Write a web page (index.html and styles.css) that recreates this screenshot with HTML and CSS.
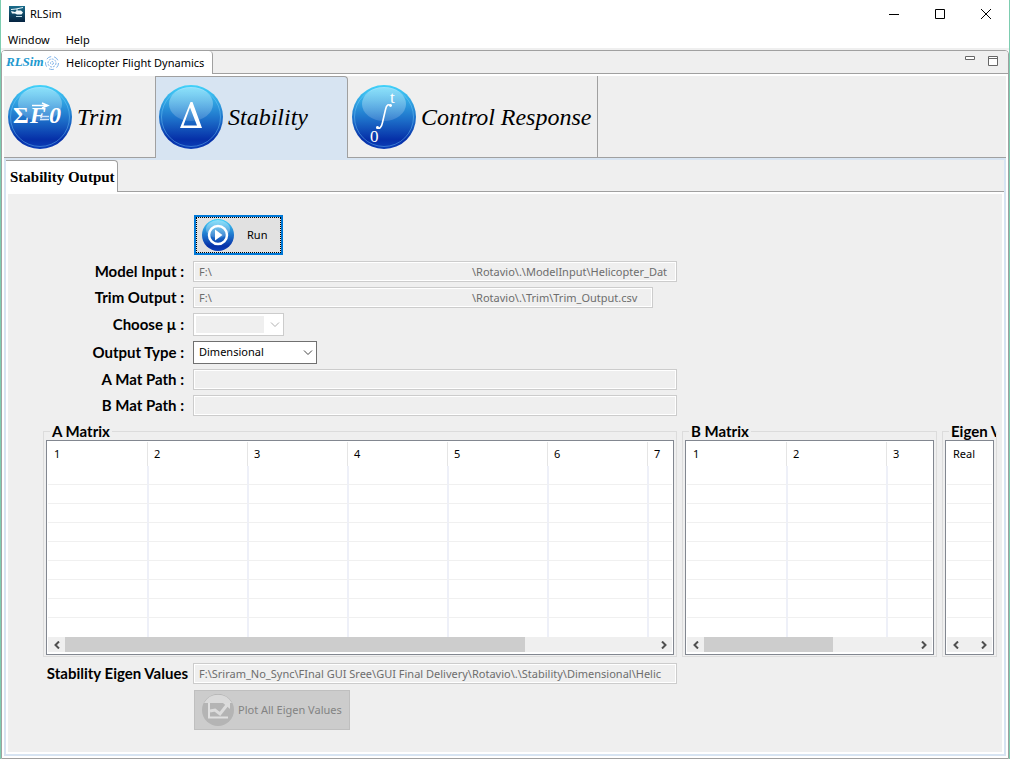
FILE: index.html
```html
<!DOCTYPE html>
<html lang="en">
<head>
<meta charset="utf-8">
<title>RLSim</title>
<link rel="stylesheet" href="styles.css">
</head>
<body>
<svg class="defs" width="0" height="0" aria-hidden="true">
  <defs>
    <linearGradient id="ball" x1="0" y1="0" x2="0" y2="1">
      <stop offset="0" stop-color="#42d3fa"/>
      <stop offset=".25" stop-color="#32a6e3"/>
      <stop offset=".55" stop-color="#1c6dc8"/>
      <stop offset=".85" stop-color="#0630a8"/>
      <stop offset="1" stop-color="#0c3fb8"/>
    </linearGradient>
    <linearGradient id="gloss" x1="0" y1="0" x2="0" y2="1">
      <stop offset="0" stop-color="#fff" stop-opacity=".4"/>
      <stop offset="1" stop-color="#fff" stop-opacity=".14"/>
    </linearGradient>
    <linearGradient id="app" x1="0" y1="0" x2="0" y2="1">
      <stop offset="0" stop-color="#1b6d8c"/>
      <stop offset="1" stop-color="#052340"/>
    </linearGradient>
    <symbol id="orb" viewBox="0 0 64 64">
      <circle cx="32" cy="32" r="32" fill="url(#ball)"/>
      <circle cx="32" cy="32" r="29.500" fill="none" stroke="#7fd4ff" stroke-opacity=".4"/>
      <ellipse cx="32" cy="19" rx="22" ry="17" fill="url(#gloss)"/>
    </symbol>
  </defs>
</svg>
<div class="window">
  <header class="titlebar">
    <svg class="app-icon" viewBox="0 0 16 16" aria-hidden="true">
      <rect width="16" height="16" fill="url(#app)"/>
      <path d="M2 3.500l5-.5 7-1.500M8 3v2" fill="none" stroke="#e8f6fb"/>
      <path d="M2 5l4 1 2-1.500h4l2 2-1.500 2H8L6 7.500H3z" fill="#f4fbfd"/>
      <path d="M7 10.500h6" fill="none" stroke="#bcd9e4"/>
    </svg>
    <h1 class="title">RLSim</h1>
    <div class="window-buttons">
      <button type="button" aria-label="Minimize"><svg viewBox="0 0 10 10"><path d="M0 5.500h10"/></svg></button>
      <button type="button" aria-label="Maximize"><svg viewBox="0 0 10 10"><path d="M.5.5h9v9h-9z"/></svg></button>
      <button type="button" aria-label="Close"><svg viewBox="0 0 10 10"><path d="M0 0l10 10M10 0L0 10"/></svg></button>
    </div>
  </header>
  <nav class="menubar">
    <button type="button">Window</button>
    <button type="button">Help</button>
  </nav>
  <main class="view">
    <div class="view-tabs">
      <button type="button" class="view-tab">
        <svg class="brand" viewBox="0 0 54 16" aria-hidden="true">
          <text x="0" y="11" class="brand-text">RLSim</text>
          <g fill="none" stroke="#7fb2e8" stroke-width="1" stroke-dasharray="2 1">
            <circle cx="46" cy="8" r="1.500"/><circle cx="46" cy="8" r="4"/><circle cx="46" cy="8" r="6.500" stroke-dasharray="5 3"/>
          </g>
        </svg>
        <span>Helicopter Flight Dynamics</span>
      </button>
      <div class="view-tools">
        <button type="button" aria-label="Minimize view"><svg viewBox="0 0 10 10"><path d="M.5.500h9v3h-9z"/></svg></button>
        <button type="button" aria-label="Maximize view"><svg viewBox="0 0 10 10"><path d="M.5.500h9v9h-9zM.5 2.500h9"/></svg></button>
      </div>
    </div>
    <div class="mode-tabs">
      <button type="button" class="mode trim">
        <svg class="orb" viewBox="0 0 64 64" aria-hidden="true">
          <use href="#orb"/>
          <text x="5" y="38" class="math bold">Σ<tspan class="slant" dx="1">F</tspan></text>
          <path d="M32 31.500h9M32 34.500h9" stroke="#d4e6fa" stroke-width="1.400"/>
          <text x="41" y="38" class="math bold slant">0</text>
          <path d="M24 20.500h15M34 18l6 2.500-6 2.500" fill="none" stroke="#fff" stroke-width="1.400"/>
        </svg>
        <span>Trim</span>
      </button>
      <button type="button" class="mode stability selected">
        <svg class="orb" viewBox="0 0 64 64" aria-hidden="true">
          <use href="#orb"/>
          <path fill-rule="evenodd" d="M21 43L31.500 17h2L43 43zM24.500 40.500H38L31 22.500z" fill="#fff"/>
        </svg>
        <span>Stability</span>
      </button>
      <button type="button" class="mode control">
        <svg class="orb" viewBox="0 0 64 64" aria-hidden="true">
          <use href="#orb"/>
          <path d="M24.500 42.500c3 2 5 0 6-5l3-13c1-5 3-6 6-3.500" fill="none" stroke="#fff" stroke-width="1.600"/>
          <circle cx="25.500" cy="42.500" r="1.400" fill="#fff"/><circle cx="38.500" cy="20.500" r="1.400" fill="#fff"/>
          <text x="38" y="18" class="math limit">t</text>
          <text x="18" y="57" class="math limit">0</text>
        </svg>
        <span>Control Response</span>
      </button>
    </div>
    <section class="panel">
      <div class="output-tabs">
        <button type="button" class="output-tab">Stability Output</button>
      </div>
      <form class="content">
        <div class="fields">
          <button type="button" class="action run">
            <svg viewBox="0 0 32 32" aria-hidden="true">
              <circle cx="16" cy="16" r="16" fill="url(#ball)"/>
              <ellipse cx="16" cy="10" rx="12" ry="9" fill="url(#gloss)"/>
              <circle cx="16" cy="16" r="9" fill="none" stroke="#fff" stroke-width="2.500"/>
              <path d="M13 10.500v11l7.500-5.500z" fill="#fff"/>
            </svg>
            <span>Run</span>
          </button>
          <label for="model">Model Input :</label>
          <input id="model" type="text" disabled value="F:\                                                                                           \Rotavio\.\ModelInput\Helicopter_Dat">
          <label for="trim">Trim Output :</label>
          <input id="trim" class="narrow" type="text" disabled value="F:\                                                                                           \Rotavio\.\Trim\Trim_Output.csv">
          <label for="mu">Choose µ :</label>
          <div class="combo small">
            <select id="mu" disabled><option></option></select>
            <svg viewBox="0 0 10 6" aria-hidden="true"><path d="M1 .5l4 4 4-4"/></svg>
          </div>
          <label for="type">Output Type :</label>
          <div class="combo">
            <select id="type"><option>Dimensional</option></select>
            <svg viewBox="0 0 10 6" aria-hidden="true"><path d="M1 .5l4 4 4-4"/></svg>
          </div>
          <label for="amat">A Mat Path :</label>
          <input id="amat" type="text" disabled>
          <label for="bmat">B Mat Path :</label>
          <input id="bmat" type="text" disabled>
        </div>
        <div class="matrices">
          <fieldset>
            <legend>A Matrix</legend>
            <div class="grid-box">
              <div class="grid-view">
                <table class="seven">
                  <thead><tr><th>1</th><th>2</th><th>3</th><th>4</th><th>5</th><th>6</th><th>7</th></tr></thead>
                  <tbody>
                    <tr><td></td><td></td><td></td><td></td><td></td><td></td><td></td></tr>
                    <tr><td></td><td></td><td></td><td></td><td></td><td></td><td></td></tr>
                    <tr><td></td><td></td><td></td><td></td><td></td><td></td><td></td></tr>
                    <tr><td></td><td></td><td></td><td></td><td></td><td></td><td></td></tr>
                    <tr><td></td><td></td><td></td><td></td><td></td><td></td><td></td></tr>
                    <tr><td></td><td></td><td></td><td></td><td></td><td></td><td></td></tr>
                    <tr><td></td><td></td><td></td><td></td><td></td><td></td><td></td></tr>
                    <tr><td></td><td></td><td></td><td></td><td></td><td></td><td></td></tr>
                    <tr><td></td><td></td><td></td><td></td><td></td><td></td><td></td></tr>
                  </tbody>
                </table>
              </div>
              <div class="scrollbar">
                <button type="button" aria-label="Scroll left"><svg viewBox="0 0 6 8"><path d="M5 .5L1.500 4 5 7.500"/></svg></button>
                <div class="track"><div class="thumb" style="width:78%"></div></div>
                <button type="button" aria-label="Scroll right"><svg viewBox="0 0 6 8"><path d="M1 .5L4.500 4 1 7.500"/></svg></button>
              </div>
            </div>
          </fieldset>
          <fieldset>
            <legend>B Matrix</legend>
            <div class="grid-box">
              <div class="grid-view">
                <table class="three">
                  <thead><tr><th>1</th><th>2</th><th>3</th></tr></thead>
                  <tbody>
                    <tr><td></td><td></td><td></td></tr>
                    <tr><td></td><td></td><td></td></tr>
                    <tr><td></td><td></td><td></td></tr>
                    <tr><td></td><td></td><td></td></tr>
                    <tr><td></td><td></td><td></td></tr>
                    <tr><td></td><td></td><td></td></tr>
                    <tr><td></td><td></td><td></td></tr>
                    <tr><td></td><td></td><td></td></tr>
                    <tr><td></td><td></td><td></td></tr>
                  </tbody>
                </table>
              </div>
              <div class="scrollbar">
                <button type="button" aria-label="Scroll left"><svg viewBox="0 0 6 8"><path d="M5 .5L1.500 4 5 7.500"/></svg></button>
                <div class="track"><div class="thumb" style="width:61%"></div></div>
                <button type="button" aria-label="Scroll right"><svg viewBox="0 0 6 8"><path d="M1 .5L4.500 4 1 7.500"/></svg></button>
              </div>
            </div>
          </fieldset>
          <fieldset>
            <legend class="clipped">Eigen Values</legend>
            <div class="grid-box">
              <div class="grid-view">
                <table class="one">
                  <thead><tr><th>Real</th></tr></thead>
                  <tbody>
                    <tr><td></td></tr><tr><td></td></tr><tr><td></td></tr>
                    <tr><td></td></tr><tr><td></td></tr><tr><td></td></tr>
                    <tr><td></td></tr><tr><td></td></tr><tr><td></td></tr>
                  </tbody>
                </table>
              </div>
              <div class="scrollbar">
                <button type="button" aria-label="Scroll left"><svg viewBox="0 0 6 8"><path d="M5 .5L1.500 4 5 7.500"/></svg></button>
                <div class="track"></div>
                <button type="button" aria-label="Scroll right"><svg viewBox="0 0 6 8"><path d="M1 .5L4.500 4 1 7.500"/></svg></button>
              </div>
            </div>
          </fieldset>
        </div>
        <div class="fields">
          <label for="eigen" class="wide">Stability Eigen Values</label>
          <input id="eigen" type="text" disabled value="F:\Sriram_No_Sync\FInal GUI Sree\GUI Final Delivery\Rotavio\.\Stability\Dimensional\Helic">
          <button type="button" class="action plot" disabled>
            <svg viewBox="0 0 32 32" aria-hidden="true">
              <circle cx="16" cy="16" r="16" fill="#b4b4b4"/>
              <path d="M2 9a16 16 0 0 1 28 0z" fill="#dadada"/>
              <path d="M7 9v14.500h19" fill="none" stroke="#e0e0e0" stroke-width="2"/>
              <path d="M8 17l5-1 5 4 7-9" fill="none" stroke="#dcdcdc" stroke-width="3"/>
              <path d="M21 9h7v6z" fill="#dcdcdc"/>
            </svg>
            <span>Plot All Eigen Values</span>
          </button>
        </div>
      </form>
    </section>
  </main>
</div>
</body>
</html>
```
FILE: styles.css
```css
* {
  box-sizing: border-box;
}

body {
  margin: 0;
  background: #fff;
  color: #000;
  font: 11px/16px "Noto Sans", "Open Sans", sans-serif;
}

button,
input,
select {
  margin: 0;
  padding: 0;
  border: 0;
  border-radius: 0;
  background: none;
  color: inherit;
  font: inherit;
}

svg {
  display: block;
  flex: none;
}

.defs {
  position: absolute;
}

.window {
  display: flex;
  flex-direction: column;
  min-height: 100vh;
  border: solid #7dcdb0;
  border-width: 0 1px;
}

/* Title and menu */

.titlebar {
  display: flex;
  align-items: center;
  height: 28px;
  padding-left: 8px;
}

.app-icon {
  width: 16px;
  height: 16px;
}

.title {
  flex: 1;
  margin: 0;
  padding-left: 5px;
  font-size: 11px;
  font-weight: 400;
}

.window-buttons {
  display: flex;
}

.window-buttons button {
  display: grid;
  place-items: center;
  width: 46px;
  height: 28px;
}

.window-buttons svg,
.view-tools svg {
  width: 10px;
  height: 10px;
  fill: none;
  stroke: #000;
}

.menubar {
  display: flex;
  gap: 16px;
  height: 22px;
  padding: 4px 7px 2px;
  border-bottom: 2px solid #efefef;
}

/* Outer view */

.view {
  display: flex;
  flex: 1;
  flex-direction: column;
  border: 1px solid #a0a0a0;
  border-radius: 4px 4px 0 0;
  overflow: hidden;
}

.view-tabs {
  display: flex;
  justify-content: space-between;
  height: 23px;
  background: linear-gradient(#a0a0a0, #a0a0a0) bottom / 100% 1px no-repeat #efefef;
}

.view-tab {
  display: flex;
  align-items: center;
  gap: 6px;
  padding: 0 8px 0 4px;
  border-right: 1px solid #a0a0a0;
  border-radius: 0 4px 0 0;
  background: #fff;
}

.brand {
  width: 54px;
  height: 16px;
}

.brand-text {
  fill: #2199cf;
  font: italic bold 13px "Liberation Serif", serif;
}

.view-tools {
  display: flex;
  align-items: flex-start;
  gap: 13px;
  padding: 5px 10px;
}

.view-tools svg {
  fill: #fff;
  stroke: #666;
}

.mode-tabs {
  display: flex;
  height: 84px;
  margin: 2px 2px 0;
  border-bottom: 2px solid #d7e4f2;
  background: linear-gradient(#a0a0a0, #a0a0a0) bottom / 100% 1px no-repeat #efefef;
}

.mode {
  display: flex;
  align-items: center;
  gap: 5px;
  padding: 0 2px 1px 4px;
  border-right: 1px solid #a0a0a0;
  font: italic 24px/32px "Liberation Serif", serif;
  white-space: nowrap;
}

.trim {
  min-width: 152px;
}

.stability {
  min-width: 192px;
}

.control {
  min-width: 250px;
}

.selected {
  padding: 0 2px 2px 3px;
  border-top: 1px solid #a0a0a0;
  border-radius: 0 4px 0 0;
  background: #d7e4f2;
}

.orb {
  width: 64px;
  height: 64px;
}

.math {
  fill: #fff;
  font: 24px "Liberation Serif", serif;
}

.limit {
  font-size: 17px;
}

.bold {
  font-weight: 700;
}

.slant {
  font-style: italic;
}

/* Output panel */

.panel {
  display: flex;
  flex: 1;
  flex-direction: column;
  margin: 0 2px 2px;
  border: 2px solid #d7e4f2;
  border-top: 0;
  background: #fff;
}

.output-tabs {
  display: flex;
  height: 32px;
  background: linear-gradient(#a0a0a0, #a0a0a0) bottom / 100% 1px no-repeat #efefef;
}

.output-tab {
  padding: 0 2px 0 4px;
  border: solid #a0a0a0;
  border-width: 1px 1px 0 0;
  border-radius: 0 4px 0 0;
  background: #fff;
  font: bold 15px/20px "Liberation Serif", serif;
}

.content {
  display: flex;
  flex: 1;
  flex-direction: column;
  margin: 2px;
  padding: 21px 5px 21px 35px;
  background: #efefef;
}

.fields {
  display: grid;
  grid-template-columns: 145px minmax(0, 484px);
  gap: 5px;
  align-items: center;
}

.fields label,
legend {
  font-family: Lato, "Noto Sans", sans-serif;
  font-size: 15px;
  font-weight: 700;
  white-space: nowrap;
}

.fields label {
  padding: 0 4px 2px 0;
  line-height: 18px;
  text-align: right;
}

.fields .wide {
  padding-right: 0;
}

.fields input {
  width: 100%;
  height: 21px;
  padding: 0 2px 0 5px;
  border: 1px solid #ccc;
  background: #efefef;
  box-shadow: inset 0 0 0 1px #fff;
  color: #6d6d6d;
}

.fields .narrow {
  width: 95%;
}

.action {
  display: flex;
  grid-column: 2;
  justify-self: start;
  align-items: center;
  height: 40px;
  margin-left: 1px;
}

.action svg {
  width: 32px;
  height: 32px;
}

.run {
  gap: 13px;
  margin-bottom: 1px;
  padding: 0 14px 0 6px;
  border: 2px solid #0078d7;
  outline: 1px dotted #000;
  outline-offset: -3px;
  background: #e1e1e1;
}

.plot {
  gap: 4px;
  margin-top: 1px;
  padding: 0 7px;
  border: 1px solid #bfbfbf;
  background: #ccc;
  color: #838383;
}

.combo {
  position: relative;
  width: 124px;
}

.small {
  width: 91px;
}

.combo select {
  display: block;
  width: 100%;
  height: 23px;
  padding: 0 20px 2px 5px;
  border: 1px solid #707070;
  background: #fff;
  appearance: none;
}

.combo select:disabled {
  border-color: #ccc;
  background: linear-gradient(#efefef, #efefef) 2px 2px / calc(100% - 21px) calc(100% - 4px) no-repeat #fff;
  opacity: 1;
}

.combo svg {
  position: absolute;
  top: 9px;
  right: 4px;
  width: 10px;
  height: 6px;
  fill: none;
  stroke: #444;
  pointer-events: none;
}

.small svg {
  stroke: #b0b0b0;
}

/* Matrices */

.matrices {
  display: grid;
  grid-template-columns: minmax(0, 634fr) minmax(0, 255fr) minmax(0, 55fr);
  gap: 5px;
  margin: 8px 0 6px;
}

fieldset {
  min-width: 0;
  margin: 0;
  padding: 2px 2px 1px;
  border: 1px solid #dcdcdc;
}

legend {
  margin-left: 4px;
  padding: 0 2px;
  line-height: 14px;
}

.clipped {
  max-width: calc(100% - 2px);
  overflow-x: clip;
}

.grid-box {
  padding: 1px 1px 2px;
  border: 1px solid #828790;
  background: #fff;
}

.grid-view {
  overflow: hidden;
}

table {
  border-spacing: 0;
  table-layout: fixed;
}

.seven {
  width: 700px;
}

.three {
  width: 300px;
}

.one {
  width: 100px;
}

th,
td {
  padding: 0;
  border-right: 1px solid #e5e5e5;
}

th {
  height: 24px;
  padding-left: 6px;
  font-weight: 400;
  text-align: left;
}

td {
  height: 19px;
  border-right-color: #eef0f8;
  border-bottom: 1px solid #f0f0f0;
}

td + td {
  border-left: 1px solid #eef0f8;
}

tr:last-child td {
  border-bottom: 0;
}

.scrollbar {
  display: flex;
  height: 15px;
  background: #efefef;
}

.scrollbar button {
  display: grid;
  place-items: center;
  width: 17px;
}

.scrollbar svg {
  width: 6px;
  height: 8px;
  fill: none;
  stroke: #505050;
  stroke-width: 2;
}

.track {
  flex: 1;
}

.thumb {
  height: 100%;
  background: #cdcdcd;
}
```
